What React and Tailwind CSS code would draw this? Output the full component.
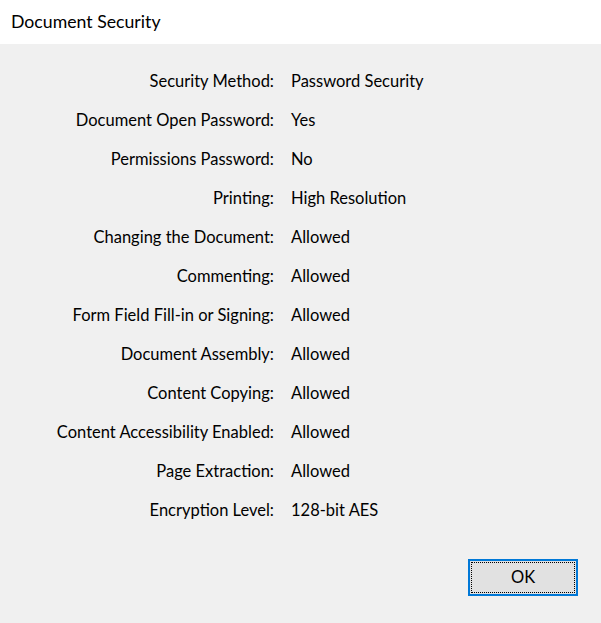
export default function App() {
  const rows = [
    ["Security Method:", "Password Security"],
    ["Document Open Password:", "Yes"],
    ["Permissions Password:", "No"],
    ["Printing:", "High Resolution"],
    ["Changing the Document:", "Allowed"],
    ["Commenting:", "Allowed"],
    ["Form Field Fill-in or Signing:", "Allowed"],
    ["Document Assembly:", "Allowed"],
    ["Content Copying:", "Allowed"],
    ["Content Accessibility Enabled:", "Allowed"],
    ["Page Extraction:", "Allowed"],
    ["Encryption Level:", "128-bit AES"],
  ];
  return (
    <div className="w-[601px] h-[623px] bg-[#f0f0f0] flex flex-col text-black" style={{ fontFamily: "Lato, 'Open Sans', sans-serif" }}>
      <div className="h-[44px] bg-white flex items-center pl-[11px] text-[17.7px] text-black">Document Security</div>
      <div className="grid grid-cols-[274px_1fr] gap-x-[17px] pt-[22px]">
        {rows.map(([l, v]) => (
          <div key={l} className="contents">
            <div className="text-right h-[39px] leading-[30px] text-[16.5px]">{l}</div>
            <div className="h-[39px] leading-[30px] text-[16.5px]">{v}</div>
          </div>
        ))}
      </div>
      <div className="flex justify-end pr-[23px] pt-[25px]">
        <button className="w-[110px] h-[37px] border-2 border-[#0078d7] bg-[#e1e1e1] p-[1px]">
          <div className="w-full h-full border border-dotted border-black flex items-center justify-center text-[16.5px] text-black">OK</div>
        </button>
      </div>
    </div>
  );
}
